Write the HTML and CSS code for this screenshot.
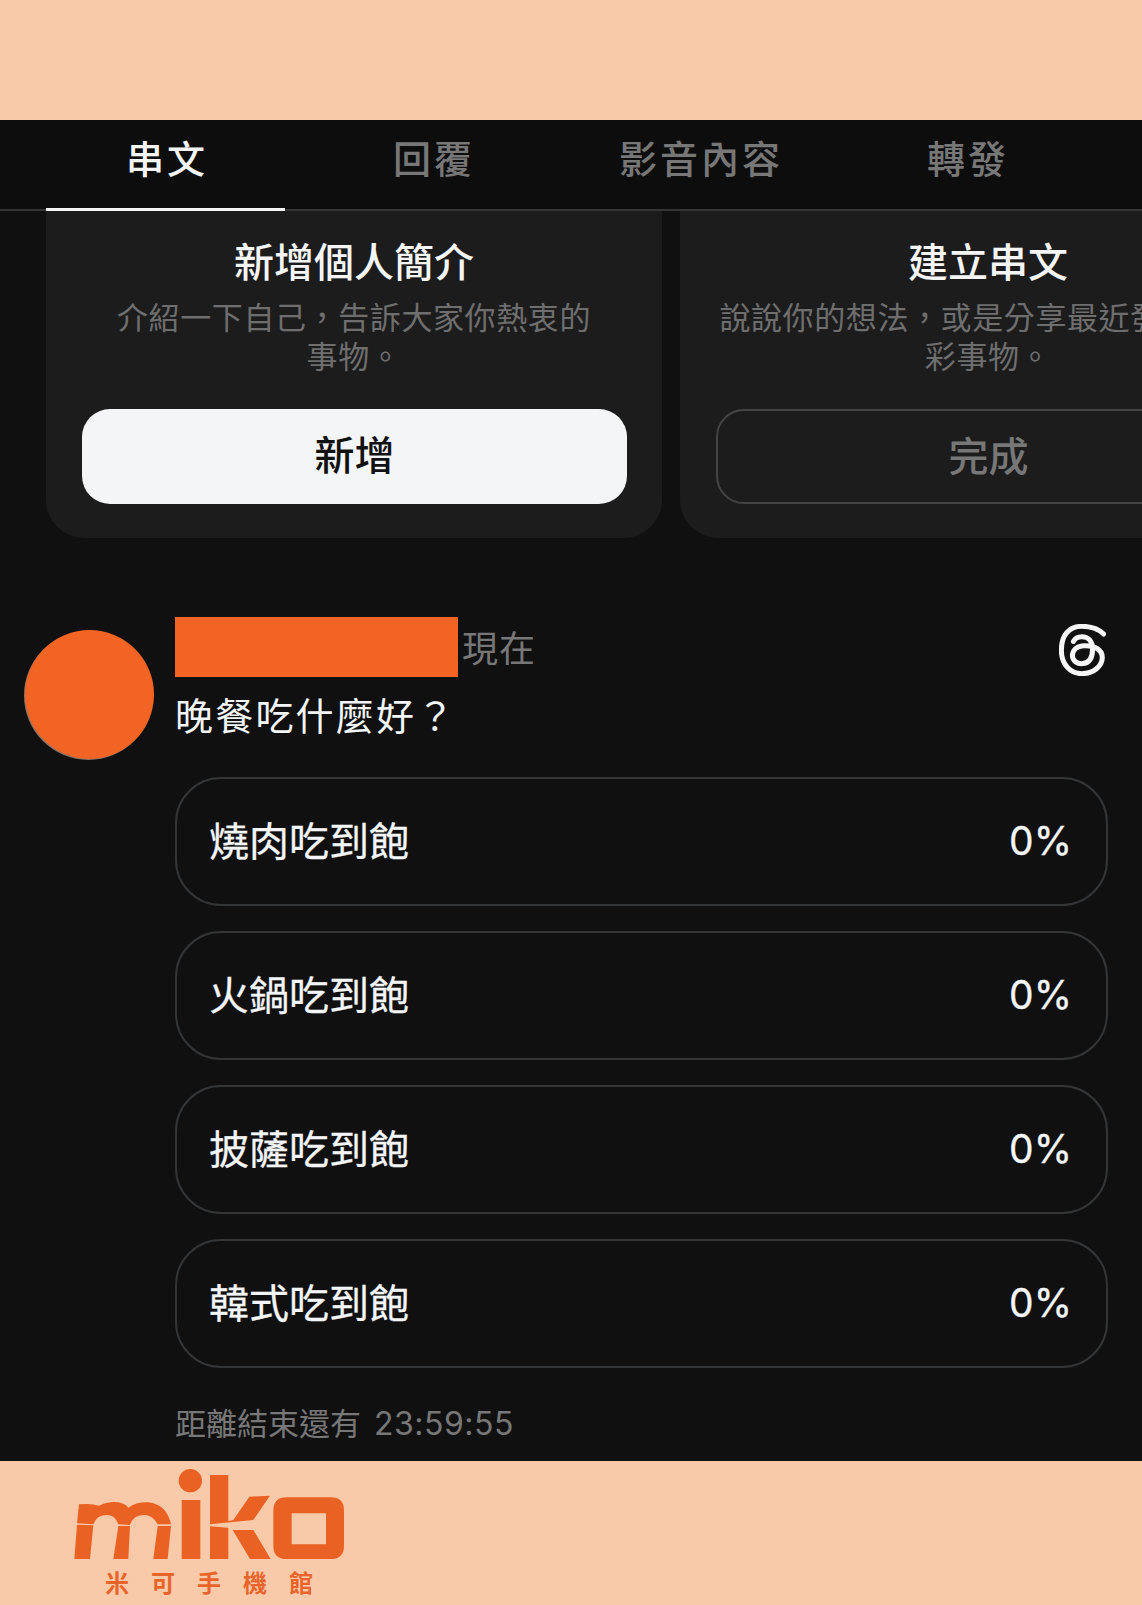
FILE: index.html
```html
<!DOCTYPE html>
<html lang="zh-Hant">
<head>
<meta charset="utf-8">
<title>miko</title>
<link rel="stylesheet" href="styles.css">
</head>
<body>
<div class="page">
  <div class="band-top"></div>
  <main class="screen">
    <nav class="tabs">
      <div class="tab active">串文</div>
      <div class="tab">回覆</div>
      <div class="tab">影音內容</div>
      <div class="tab">轉發</div>
    </nav>
    <section class="cards">
      <article class="card">
        <h2 class="card-title">新增個人簡介</h2>
        <p class="card-desc">介紹一下自己，告訴大家你熱衷的<br>事物。</p>
        <div class="btn btn-solid">新增</div>
      </article>
      <article class="card">
        <h2 class="card-title">建立串文</h2>
        <p class="card-desc">說說你的想法，或是分享最近發生的精<br>彩事物。</p>
        <div class="btn btn-ghost">完成</div>
      </article>
    </section>
    <section class="post">
      <div class="avatar"></div>
      <div class="post-body">
        <div class="post-head">
          <div class="redact"></div>
          <span class="time">現在</span>
          <svg class="threads" viewBox="172 70 140 155" fill="none" stroke="#f5f5f5" stroke-width="15" stroke-linecap="round">
            <path d="M305 100C285 80 262 77 240 77 200 77 179 105 179 148 179 190 205 218 240 218 275 218 301 195 301 170 301 145 275 133 245 135 222 137 212 150 212 165 212 180 228 190 242 188 262 186 272 170 272 145 272 120 258 108 240 108 228 108 220 112 215 122"/>
          </svg>
        </div>
        <p class="question">晚餐吃什麼好？</p>
        <div class="options">
          <div class="option"><span>燒肉吃到飽</span><span class="pct">0%</span></div>
          <div class="option"><span>火鍋吃到飽</span><span class="pct">0%</span></div>
          <div class="option"><span>披薩吃到飽</span><span class="pct">0%</span></div>
          <div class="option"><span>韓式吃到飽</span><span class="pct">0%</span></div>
        </div>
        <p class="remain">距離結束還有 <span class="remain-time">23:59:55</span></p>
      </div>
    </section>
  </main>
  <footer class="band-bottom">
    <svg class="logo" viewBox="0 0 870 300" fill="#ea6223">
      <path d="M42 118Q80 114 102 122 130 108 160 112 178 115 190 128 215 110 250 112 305 118 318 178L278 178Q265 152 240 150 205 148 195 180L160 178Q150 150 125 150 95 150 85 178L36 175Z"/>
      <path d="M36 179 85 181 75 282 28 282Z"/>
      <path d="M160 183 195 183 190 282 145 282Z"/>
      <path d="M278 183 318 183 308 282 265 282Z"/>
      <circle cx="376" cy="47" r="35"/>
      <rect x="350" y="105" width="56" height="177"/>
      <path d="M435 30 490 30 490 168 505 165 553 95 615 92 565 165 435 178Z"/>
      <path d="M435 184 490 188 490 282 435 282Z"/>
      <path d="M503 195 565 195 617 282 555 282Z"/>
      <path fill-rule="evenodd" d="M665 97H797Q837 97 837 137V242Q837 282 797 282H665Q625 282 625 242V137Q625 97 665 97ZM680 145V238H783V145Z"/>
    </svg>
    <div class="logo-sub">米可手機館</div>
  </footer>
</div>
</body>
</html>
```
FILE: styles.css
```css
* { box-sizing: border-box; }
html, body { margin: 0; padding: 0; }
body {
  font-family: "Noto Sans CJK TC", "Noto Sans", sans-serif;
  background: #f9caaa;
}
.page {
  width: 1142px;
  height: 1605px;
  display: flex;
  flex-direction: column;
  overflow: hidden;
}
.band-top { height: 120px; background: #f9caaa; flex: none; }
.screen {
  height: 1341px;
  flex: none;
  background: #101011;
  overflow: hidden;
}
.tabs {
  height: 91px;
  display: grid;
  grid-template-columns: repeat(4, 239px);
  column-gap: 28px;
  padding-left: 46px;
  border-bottom: 2px solid #333536;
  background: #0d0d0e;
}
.tab {
  height: 91px;
  padding: 8px 0 0 3px;
  font-size: 38px;
  line-height: 58px;
  letter-spacing: 3px;
  text-align: center;
  font-weight: 500;
  color: #777;
  white-space: nowrap;
}
.tab.active { color: #f5f5f5; border-bottom: 3px solid #f5f5f5; }
.cards {
  display: flex;
  gap: 18px;
  margin-left: 46px;
  width: 1300px;
}
.card {
  flex: none;
  width: 616px;
  height: 327px;
  padding: 22px 35px 0 35px;
  background: #1c1c1d;
  border-radius: 0 0 38px 38px;
  text-align: center;
}
.card-title {
  margin: 0;
  font-size: 40px;
  line-height: 54px;
  font-weight: 500;
  color: #f5f5f5;
}
.card-desc {
  margin: 10px 0 0;
  font-size: 31px;
  letter-spacing: 0.6px;
  line-height: 38.5px;
  height: 77px;
  font-weight: 400;
  color: #6e6e6e;
  white-space: nowrap;
}
.btn {
  margin: 35px 0 0 1px;
  height: 95px;
  border-radius: 28px;
  font-size: 40px;
  line-height: 89px;
  font-weight: 500;
}
.btn-solid { background: #f3f5f7; color: #111; }
.btn-ghost { border: 2px solid #444; color: #777; line-height: 86px; }
.post {
  display: flex;
  padding: 79px 34px 0 25px;
}
.avatar {
  flex: none;
  width: 129px;
  height: 129px;
  margin-top: 13px;
  border-radius: 50%;
  background: #f16423;
  box-shadow: -1px 1px 0 #8d7568;
}
.post-body { flex: 1; margin-left: 21px; min-width: 0; }
.post-head { display: flex; align-items: center; height: 60px; }
.redact { width: 283px; height: 60px; background: #f16423; flex: none; }
.time {
  margin-left: 4px;
  margin-top: -2px;
  font-size: 36px;
  letter-spacing: 1px;
  line-height: 60px;
  color: #777;
}
.threads { width: 47px; height: 52px; margin-left: auto; margin-right: 2px; margin-top: 6px; }
.question {
  margin: 7px 0 0;
  font-size: 38px;
  letter-spacing: 2.2px;
  line-height: 60px;
  color: #f3f5f7;
}
.options { display: flex; flex-direction: column; gap: 25px; margin-top: 33px; }
.option {
  height: 129px;
  display: flex;
  align-items: center;
  justify-content: space-between;
  padding: 0 34px 6px 32px;
  border: 2px solid #333536;
  border-radius: 46px;
  font-size: 40px;
  font-weight: 400;
  -webkit-text-stroke: 0.3px #f3f5f7;
  color: #f3f5f7;
}
.pct { font-family: Inter, "Liberation Sans", sans-serif; font-size: 39px; margin-top: 4px; }
.remain {
  margin: 32px 0 0;
  font-size: 31px;
  line-height: 44px;
  color: #777;
}
.remain-time { font-family: Inter, "Liberation Sans", sans-serif; font-size: 32px; letter-spacing: 0.5px; margin-left: 6px; }
.band-bottom { flex: 1; background: #f9caaa; padding: 4px 0 0 65px; }
.logo { display: block; width: 290px; height: 100px; }
.logo-sub {
  margin: 1px 0 0 40px;
  font-size: 24px;
  line-height: 32px;
  font-weight: 700;
  letter-spacing: 22px;
  color: #e8642a;
  white-space: nowrap;
}
```
